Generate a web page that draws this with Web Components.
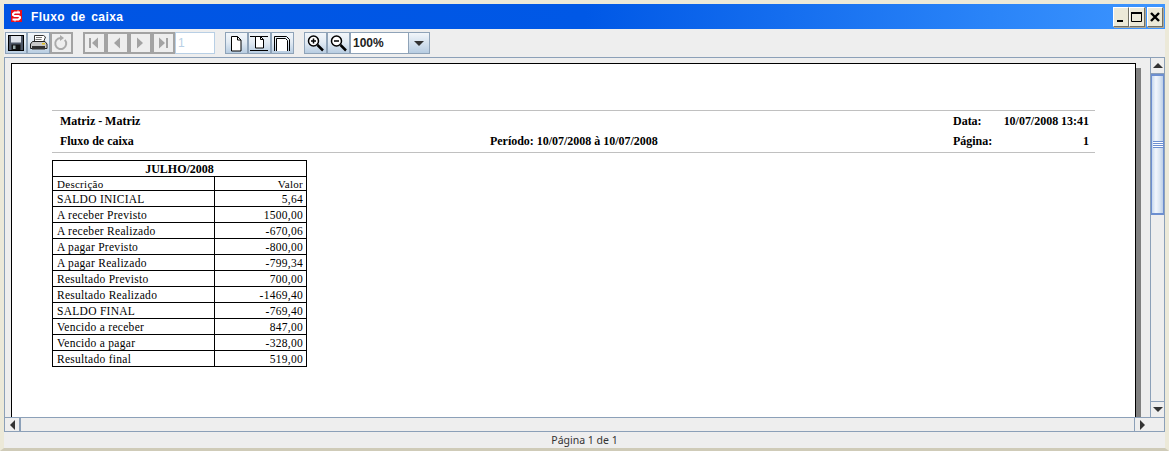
<!DOCTYPE html>
<html lang="pt"><head><meta charset="utf-8"><title>Fluxo de caixa</title>
<style>
html,body{margin:0;padding:0;background:#ece9d8}
</style></head><body>
<x-window>
  <x-titlebar slot="title" label="Fluxo de caixa"></x-titlebar>
  <x-toolbar slot="tools"></x-toolbar>
  <x-viewer slot="viewer">
    <x-report-page>
      <x-report-header></x-report-header>
      <x-report-table></x-report-table>
    </x-report-page>
  </x-viewer>
  <x-status slot="status">Página 1 de 1</x-status>
</x-window>
<script>
const def=(name,css,html,init)=>{customElements.define(name,class extends HTMLElement{
  connectedCallback(){ if(this.shadowRoot)return; const r=this.attachShadow({mode:'open'});
    r.innerHTML='<style>'+css+'</style>'+(typeof html==='function'?html(this):html); if(init)init(r,this);}
});};

def('x-window',`:host{display:flex;flex-direction:column;width:1169px;height:451px;box-sizing:border-box;
  background:#eee;border:solid #ece9d8;border-width:4px 4px 3px 4px;border-bottom-color:#cfcbb8;overflow:hidden}
  ::slotted([slot=viewer]){flex:1;min-height:0}`,
  `<slot name="title"></slot><slot name="tools"></slot><slot name="viewer"></slot><slot name="status"></slot>`);

const btnCss=`:host{display:block;width:16px;height:20px;box-sizing:border-box;background:#ece9d8;
  border:1px solid;border-color:#fff #716f64 #716f64 #fff;box-shadow:1px 1px 0 #aca899;display:flex;align-items:center;justify-content:center}`;
def('x-win-btn',btnCss,x=>`<svg width="14" height="14" viewBox="0 0 14 14">${{
  min:'<rect x="3" y="10" width="6" height="2" fill="#000"/>',
  max:'<path d="M1.500 2.500h10v9h-10z" fill="none" stroke="#000"/><rect x="1" y="2" width="11" height="2" fill="#000"/>',
  close:'<path d="M3 3l8 8M11 3l-8 8" stroke="#000" stroke-width="2.400" fill="none"/>'}[x.getAttribute('kind')]}</svg>`);

def('x-titlebar',`:host{display:flex;align-items:center;height:25px;box-sizing:border-box;padding:0 2px 0 7px;
  background:linear-gradient(90deg,#0054e3 0,#0058e6 50%,#2a84f8 85%,#3d95ff 100%);color:#fff;
  font:bold 12px "Liberation Sans",sans-serif;letter-spacing:.4px;word-spacing:2px}
  svg{display:block;margin:-2px 9px 0 0;flex:none}
  span{flex:1}
  .b{display:flex;gap:2px;align-items:center}.m{display:flex}`,
  x=>`<svg width="11" height="12" viewBox="0 0 11 12"><rect width="11" height="12" fill="#e8101c"/>
  <path d="M9 2.500H3.500L2 4v1l1.500 1h4L9 7v1L7.500 9.500H1.500" fill="none" stroke="#fff" stroke-width="2"/><path d="M7 .5v2M4 9.500v2" stroke="#fff" stroke-width="1"/></svg>
  <span>${x.getAttribute('label')}</span>
  <div class="b"><div class="m"><x-win-btn kind="min"></x-win-btn><x-win-btn kind="max"></x-win-btn></div><x-win-btn kind="close"></x-win-btn></div>`);

const ic={
 save:'<rect x="1.500" y="1.500" width="15" height="15" fill="#4d5666" stroke="#000"/><rect x="4" y="2" width="10" height="6.500" fill="#dfe3ea"/><rect x="4.500" y="10.500" width="9" height="5.500" fill="#111"/><rect x="6" y="11.500" width="2.500" height="3.500" fill="#9aa"/>',
 print:'<path d="M5.500 1.500h9l2 1.500-2 5h-9z" fill="#fff" stroke="#333"/><path d="M7 3.500h6M6.500 5.500h6" stroke="#777"/><path d="M1.500 10l2-2.500h12.500l2 2.500v4.500h-16.500z" fill="#c9c9c9" stroke="#222"/><rect x="3" y="12" width="13" height="3.500" fill="#333"/><rect x="13" y="9" width="3" height="1.500" fill="#e0c020"/>',
 reload:'<path d="M12.800 5.800A5.500 5.500 0 1 1 8.500 4" fill="none" stroke="#aaa" stroke-width="2"/><path d="M8 1l4 3-4 3z" fill="#aaa"/>',
 first:'<rect x="4" y="4" width="2" height="10" fill="#a3a3a3"/><path d="M13 3.500v11L7 9z" fill="#a3a3a3"/>',
 prev:'<path d="M12 3.500v11L6 9z" fill="#a3a3a3"/>',
 next:'<path d="M6 3.500v11L12 9z" fill="#a3a3a3"/>',
 last:'<rect x="12" y="4" width="2" height="10" fill="#a3a3a3"/><path d="M5 3.500v11L11 9z" fill="#a3a3a3"/>',
 page:'<path d="M4.500 2.500h6l3.500 3.500v11h-9.500z" fill="#fff" stroke="#000"/><path d="M10.500 2.500v3.500h3.500" fill="none" stroke="#000"/>',
 width:'<path d="M0 2.500h18M0 16.500h18" stroke="#000"/><path d="M5.500 2.500h5l3 3v8.500h-8z" fill="#fff" stroke="#000"/><path d="M10.500 2.500v3h3" fill="none" stroke="#000"/>',
 height:'<path d="M1.500 17V2.500h12l3 3V17" fill="none" stroke="#000"/><path d="M3.500 17V4.500h9l2 2V17" fill="#fff" stroke="#000"/>',
 zin:'<circle cx="7.500" cy="7" r="5" fill="#fff" stroke="#000" stroke-width="1.500"/><path d="M5 7h5M7.500 4.500v5" stroke="#000" stroke-width="1.500"/><path d="M11.500 11l5.500 5.500" stroke="#000" stroke-width="2.500"/>',
 zout:'<circle cx="7.500" cy="7" r="5" fill="#fff" stroke="#000" stroke-width="1.500"/><path d="M5 7h5" stroke="#000" stroke-width="1.500"/><path d="M11.500 11l5.500 5.500" stroke="#000" stroke-width="2.500"/>'
};
def('x-tool',`:host{display:flex;align-items:center;justify-content:center;width:23px;height:22px;box-sizing:border-box;
  border:1px solid #8fa3b8;background:linear-gradient(#f2f6fa,#e3ebf3 45%,#b8cde2)}
  :host([off]){background:#eee;border:2px solid #a3a3a3}
  :host([i=save]){width:22px}
  svg{display:block;flex:none}`,
  x=>`<svg width="19" height="19" viewBox="0 0 19 19">${ic[x.getAttribute('i')]}</svg>`);

def('x-toolbar',`:host{display:flex;align-items:flex-start;height:29px;box-sizing:border-box;padding:3px 0 0 1px;
  border-bottom:1px solid #8ca0b8;background:#eee}
  .g{display:flex}.sp{width:10px;flex:none}
  .num{width:40px;height:22px;box-sizing:border-box;background:#fff;border:1px solid #b8cfe5;color:#b8cfe5;
    font:12px "Liberation Sans",sans-serif;line-height:20px;padding-left:2px}
  .combo{display:flex;width:80px;height:22px;box-sizing:border-box;border:1px solid #8fa3b8;background:#fff}
  .combo b{flex:1;font:bold 12px "Liberation Sans",sans-serif;line-height:20px;padding-left:2px;color:#222}
  .combo i{width:20px;border-left:1px solid #8fa3b8;background:linear-gradient(#f2f6fa,#b8cde2);display:flex;align-items:center;justify-content:center}
  .combo i::after{content:"";border:solid transparent;border-width:5px 5px 0;border-top-color:#333}`,
  `<div class="g"><x-tool i="save"></x-tool><x-tool i="print"></x-tool><x-tool i="reload" off></x-tool></div><div class="sp"></div>
   <div class="g"><x-tool i="first" off></x-tool><x-tool i="prev" off></x-tool><x-tool i="next" off></x-tool><x-tool i="last" off></x-tool><div class="num">1</div></div><div class="sp"></div>
   <div class="g"><x-tool i="page"></x-tool><x-tool i="width"></x-tool><x-tool i="height"></x-tool></div><div class="sp"></div>
   <div class="g"><x-tool i="zin"></x-tool><x-tool i="zout"></x-tool><div class="combo"><b>100%</b><i></i></div></div>`);

const arrow=d=>({up:'border-width:0 5px 5px;border-bottom-color:#333',down:'border-width:5px 5px 0;border-top-color:#333',left:'border-width:5px 5px 5px 0;border-right-color:#333',right:'border-width:5px 0 5px 5px;border-left-color:#333'}[d]);
def('x-arrow',`:host{display:flex;align-items:center;justify-content:center;flex:none;box-sizing:border-box;width:15px;height:15px;background:#eee}
  :host([d=up]),:host([d=down]){height:16px}
  i{width:0;height:0;border-style:solid;border-color:transparent}`,
  x=>`<i style="${arrow(x.getAttribute('d'))}"></i>`);

def('x-viewer',`:host{display:grid;grid-template-columns:1fr 15px;grid-template-rows:1fr 15px;box-sizing:border-box;
   border-left:1px solid #8ca0b8;background:#eee;min-height:0}
  .view{overflow:hidden;padding:5px 12px 0 6px;min-width:0;min-height:0}
  .v{display:flex;flex-direction:column;border-left:1px solid #8ca0b8;border-right:1px solid #8ca0b8;min-height:0}
  .v .btn{border-bottom:1px solid #8ca0b8}
  .v .thumb{height:141px;box-sizing:border-box;flex:none;border:solid #6d8fd0;border-width:2px 1px;
     background:linear-gradient(90deg,#c6d8ef,#f2f6fc 35%,#dbe6f3 70%,#bccfe8);display:flex;align-items:center;justify-content:center}
  .v .thumb i{display:block;width:10px;height:7px;background:repeating-linear-gradient(#6d8fd0 0 1px,#fff 1px 2px)}
  .v .track{flex:1}
  .v x-arrow{width:13px}
  .h{display:flex;border:solid #8ca0b8;border-width:1px 0}
  .h .track{flex:1}
  .h x-arrow{height:13px;width:16px}
  .h x-arrow:first-child{border-right:2px solid #8ca0b8}
  .h x-arrow:last-child{border-left:1px solid #8ca0b8}
  .corner{border:solid #8ca0b8;border-width:1px 1px 1px 0}`,
  `<div class="view"><slot></slot></div>
   <div class="v"><x-arrow d="up" class="btn"></x-arrow><div class="thumb"><i></i></div><div class="track"></div><x-arrow d="down" style="border-top:1px solid #8ca0b8"></x-arrow></div>
   <div class="h"><x-arrow d="left"></x-arrow><div class="track"></div><x-arrow d="right"></x-arrow></div>
   <div class="corner"></div>`);

def('x-report-page',`:host{display:block;box-sizing:border-box;width:1125px;height:440px;background:#fff;border:1px solid #000;
  box-shadow:5px 5px 0 #808080;padding:46px 40px 0}`,`<slot></slot>`);

def('x-report-header',`:host{display:block;border:solid #c0c0c0;border-width:1px 0;height:43px;box-sizing:border-box;
  font:bold 12px "Liberation Serif",serif;color:#000;letter-spacing:-.02px}
  .r{display:grid;grid-template-columns:430px 1fr 36px auto;height:20px;padding:0 6px 0 8px;align-items:center}
  .r:first-child{margin-top:2px}
  .l{white-space:nowrap}.rt{text-align:right;width:100px}`,
  `<div class="r"><span>Matriz - Matriz</span><span></span><span class="l">Data:</span><span class="rt">10/07/2008 13:41</span></div>
   <div class="r"><span>Fluxo de caixa</span><span>Período: 10/07/2008 à 10/07/2008</span><span class="l">Página:</span><span class="rt">1</span></div>`);

const rows=[["SALDO INICIAL","5,64"],["A receber Previsto","1500,00"],["A receber Realizado","-670,06"],["A pagar Previsto","-800,00"],["A pagar Realizado","-799,34"],["Resultado Previsto","700,00"],["Resultado Realizado","-1469,40"],["SALDO FINAL","-769,40"],["Vencido a receber","847,00"],["Vencido a pagar","-328,00"],["Resultado final","519,00"]];
def('x-report-table',`:host{display:block;margin-top:7px;width:255px;box-sizing:border-box;border:1px solid #000;border-width:1px 1px 0 1px;
   font:11.5px "Liberation Serif",serif;color:#000}
  .t{font-weight:bold;font-size:12px;text-align:center;height:16px;line-height:17px;box-sizing:border-box;border-bottom:1px solid #000}
  .r{display:grid;grid-template-columns:162px 1fr;height:16px;box-sizing:border-box;border-bottom:1px solid #000;line-height:16px;letter-spacing:.28px}
  .r.h{height:14px;line-height:14px;font-size:11px}
  .r span:first-child{padding-left:4px;border-right:1px solid #000;white-space:nowrap}
  .r span:last-child{text-align:right;padding-right:3px}`,
  `<div class="t">JULHO/2008</div><div class="r h"><span>Descrição</span><span>Valor</span></div>`+
  rows.map(r=>`<div class="r"><span>${r[0]}</span><span>${r[1]}</span></div>`).join(''));

def('x-status',`:host{display:block;height:16px;background:#eee;text-align:center;color:#333;
   font:10.500px "Noto Sans",sans-serif;line-height:16px}`,`<slot></slot>`);
</script>
</body></html>
